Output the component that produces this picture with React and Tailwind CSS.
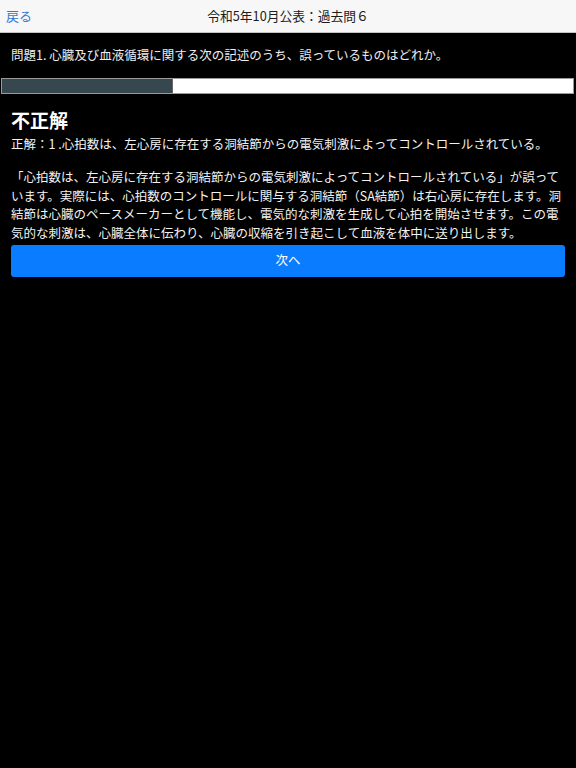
import React from 'react'

const font = { fontFamily: '"Noto Sans CJK JP", "Noto Sans", sans-serif' }

export default function App() {
  const progress = 30

  return (
    <div className="min-h-screen w-full bg-black" style={font}>
      {/* Nav bar */}
      <header className="relative h-[33px] bg-[#f7f7f7] border-b border-[#c4c4c4] flex items-center justify-center">
        <button className="absolute left-[6px] top-0 h-full flex items-center text-[13px] text-[#2f7bd6]">
          戻る
        </button>
        <h1 className="text-[12.75px] text-[#1c1c1c]">令和5年10月公表：過去問６</h1>
      </header>

      {/* Question */}
      <p className="pl-[11px] pr-[11px] pt-[13.5px] pb-[15.5px] text-[12.5px] leading-[16px] text-[#eeeeee]">
        問題1. 心臓及び血液循環に関する次の記述のうち、誤っているものはどれか。
      </p>

      {/* Progress */}
      <div className="ml-[1px] w-[573px] h-[16px] bg-white border border-[#9a9a9a] flex">
        <div className="h-full bg-[#37474f] border-r border-[#666]" style={{ width: `${progress}%` }} />
      </div>

      {/* Result */}
      <div className="px-[11px] pt-[13.5px]">
        <h2 className="text-[19px] leading-[24px] font-bold text-white">不正解</h2>
        <p className="mt-[3.5px] text-[12.5px] leading-[18.75px] text-[#f2f2f2]">
          正解：1 .心拍数は、左心房に存在する洞結節からの電気刺激によってコントロールされている。
        </p>
        <p className="mt-[14px] text-[12.5px] leading-[18.75px] text-[#f2f2f2]">
          「心拍数は、左心房に存在する洞結節からの電気刺激によってコントロールされている」が誤っています。実際には、心拍数のコントロールに関与する洞結節（SA結節）は右心房に存在します。洞結節は心臓のペースメーカーとして機能し、電気的な刺激を生成して心拍を開始させます。この電気的な刺激は、心臓全体に伝わり、心臓の収縮を引き起こして血液を体中に送り出します。
        </p>
        <button className="mt-[2px] w-full h-[32px] rounded-[3px] bg-[#0a7cff] text-white text-[12.5px] flex items-center justify-center">
          次へ
        </button>
      </div>
    </div>
  )
}
